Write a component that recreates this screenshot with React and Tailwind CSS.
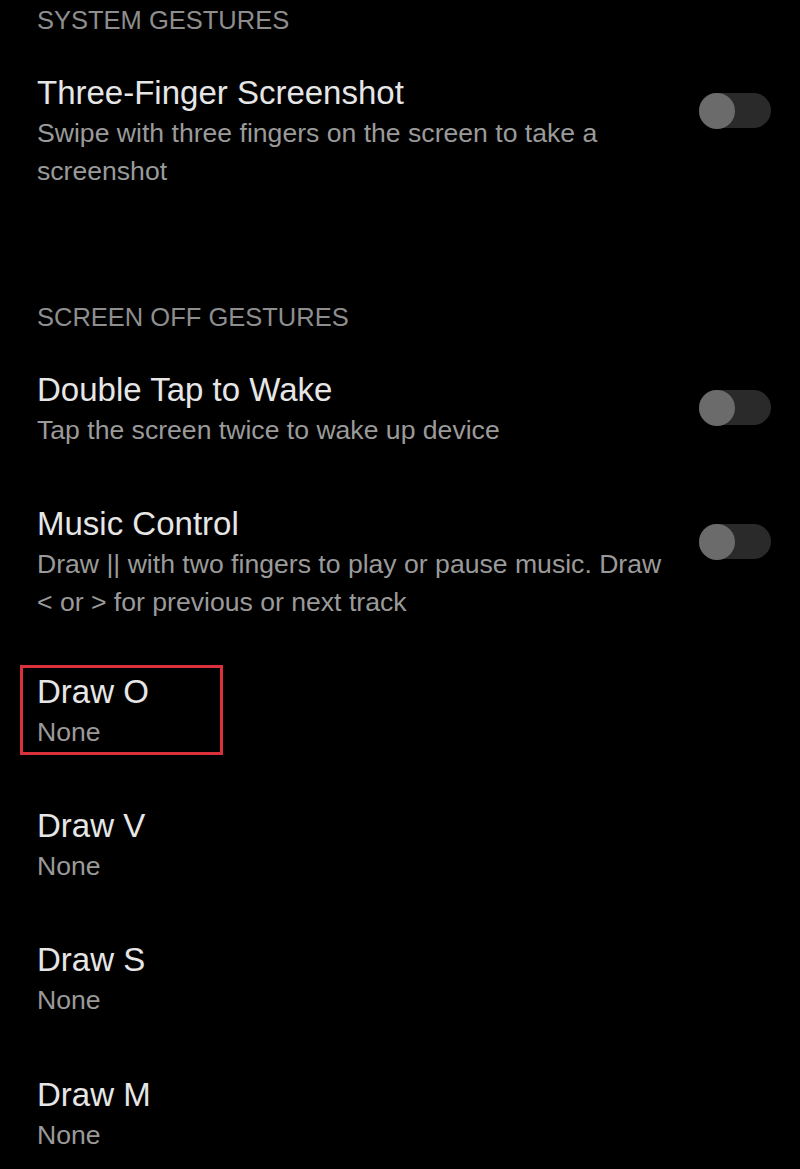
import React from 'react';

const font = { fontFamily: '"Liberation Sans", Arial, sans-serif' };

function Toggle() {
  return (
    <div className="mt-[20px] flex h-[35px] w-[72px] shrink-0 items-center rounded-full bg-[#2a2a2a]">
      <div className="h-[36px] w-[36px] rounded-full bg-[#6b6b6b]" />
    </div>
  );
}

function SectionHeader({ children, className = '' }) {
  return (
    <div className={`text-[25.5px] leading-[30px] text-[#8e8e8e] ${className}`}>{children}</div>
  );
}

function SettingRow({ title, lines, toggle, highlight, className = '' }) {
  return (
    <div className={`relative flex items-start justify-between ${className}`}>
      {highlight && (
        <div className="pointer-events-none absolute left-[-17px] top-[-7px] h-[90px] w-[203px] border-[3px] border-[#d9303c]" />
      )}
      <div className="w-[634px]">
        <div className="text-[33px] leading-[40px] text-[#e6e6e6]">{title}</div>
        <div className="mt-px text-[26.6px] leading-[38px] text-[#9a9a9a]">
          {lines.map((l, i) => (
            <div key={i}>{l}</div>
          ))}
        </div>
      </div>
      {toggle && <Toggle />}
    </div>
  );
}

export default function App() {
  return (
    <div className="min-h-[1169px] w-[800px] overflow-hidden bg-black pl-[37px] pr-[29px] pt-[5px]" style={font}>
      <SectionHeader>SYSTEM GESTURES</SectionHeader>

      <SettingRow
        className="mt-[38px]"
        title="Three-Finger Screenshot"
        lines={['Swipe with three fingers on the screen to take a', 'screenshot']}
        toggle
      />

      <SectionHeader className="mt-[112px]">SCREEN OFF GESTURES</SectionHeader>

      <SettingRow
        className="mt-[38px]"
        title="Double Tap to Wake"
        lines={['Tap the screen twice to wake up device']}
        toggle
      />
      <SettingRow
        className="mt-[55px]"
        title="Music Control"
        lines={['Draw || with two fingers to play or pause music. Draw', '< or > for previous or next track']}
        toggle
      />

      <SettingRow className="mt-[51px]" title="Draw O" lines={['None']} highlight />
      <SettingRow className="mt-[55px]" title="Draw V" lines={['None']} />
      <SettingRow className="mt-[55px]" title="Draw S" lines={['None']} />
      <SettingRow className="mt-[56px]" title="Draw M" lines={['None']} />
    </div>
  );
}
